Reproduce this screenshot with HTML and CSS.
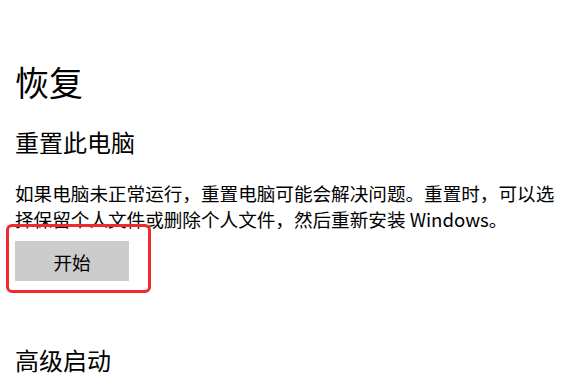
FILE: index.html
```html
<!DOCTYPE html>
<html lang="zh-CN">
<head>
<meta charset="utf-8">
<title>恢复</title>
<link rel="stylesheet" href="styles.css">
</head>
<body>
<main class="page">
  <h1 class="title">恢复</h1>
  <h2 class="section">重置此电脑</h2>
  <p class="desc">如果电脑未正常运行，重置电脑可能会解决问题。重置时，可以选择保留个人文件或删除个人文件，然后重新安装 Windows。</p>
  <div class="action">
    <button class="btn" type="button">开始</button>
    <span class="highlight"></span>
  </div>
  <h2 class="section advanced">高级启动</h2>
</main>
</body>
</html>
```
FILE: styles.css
```css
html, body {
  margin: 0;
  padding: 0;
  background: #fff;
}
body {
  font-family: "Noto Sans CJK SC", "Noto Sans", sans-serif;
  color: #000;
}
.page {
  padding: 62px 0 0 15px;
  width: 550px;
}
.title {
  margin: 0;
  font-size: 34px;
  line-height: 40px;
  font-weight: 400;
}
.section {
  margin: 25px 0 0;
  font-size: 24px;
  line-height: 30px;
  font-weight: 400;
}
.desc {
  margin: 23px 0 0;
  font-size: 18.6px;
  line-height: 26px;
}
.action {
  position: relative;
  margin-top: 9px;
  width: 114px;
  height: 40px;
}
.btn {
  display: block;
  width: 114px;
  height: 40px;
  border: 0;
  padding: 0;
  margin: 0;
  background: #cccccc;
  font-family: inherit;
  font-size: 18.6px;
  color: #000;
}
.highlight {
  position: absolute;
  left: -9px;
  top: -17px;
  width: 139px;
  height: 63px;
  border: 3px solid #ee2b2b;
  border-radius: 6px;
}
.advanced {
  margin-top: 64px;
}
```
